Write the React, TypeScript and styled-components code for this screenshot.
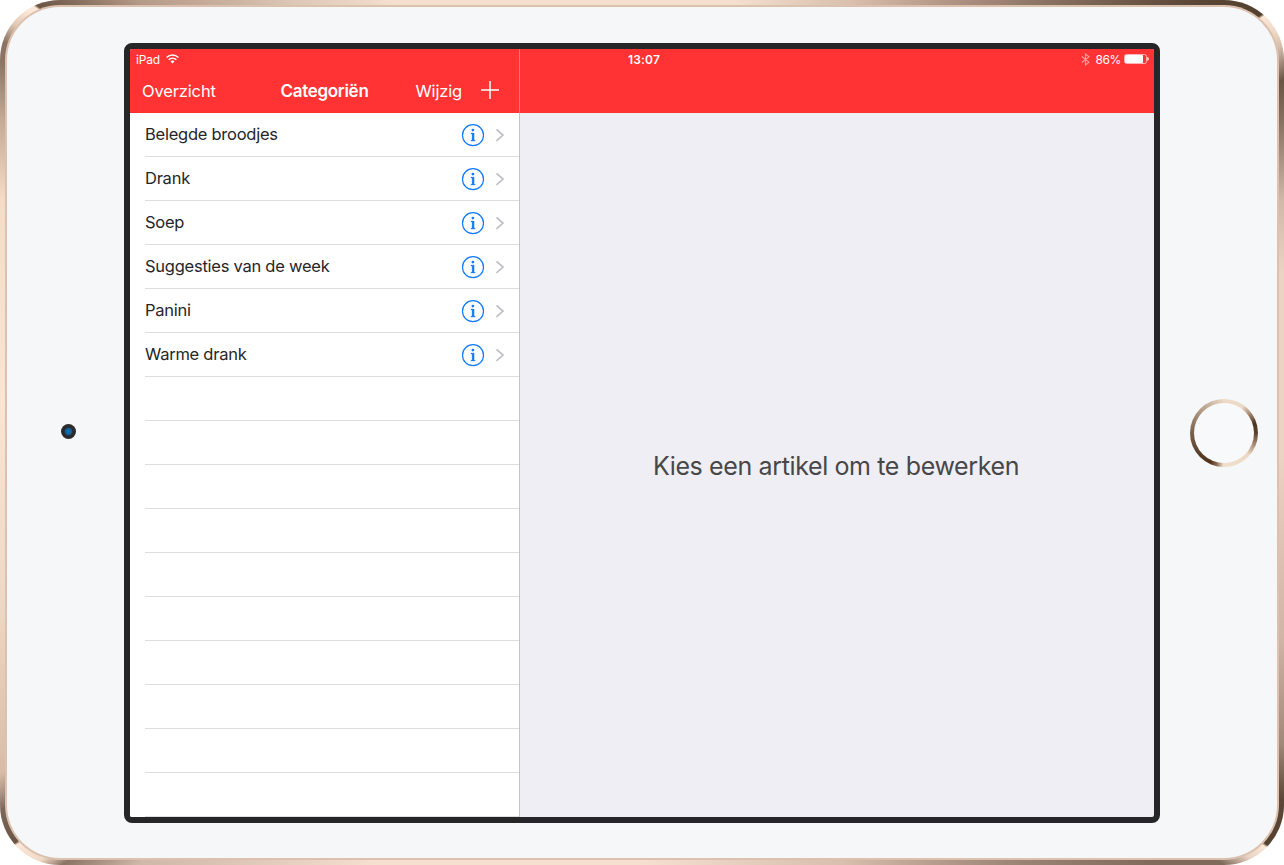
import React from 'react';
import styled, { createGlobalStyle } from 'styled-components';

const Global = createGlobalStyle`
  * { box-sizing: border-box; }
  html, body { margin: 0; background: #fff; overflow: hidden; }
  body { font-family: Inter, "Liberation Sans", sans-serif; color: #262628; }
`;

const Device = styled.div`
  width: 1284px;
  height: 865px;
  padding: 5px;
  border-radius: 60px;
  background: conic-gradient(
    #f5e0cf 0deg, #f5e0cf 12deg, #d8bfae 26deg, #9b8272 40deg, #5a4636 52.4deg, #54402f 56deg,
    #fce8d8 56.2deg, #f0dac8 57.5deg, #d8c0ae 58.8deg, #6a5444 61.2deg, #86705f 64deg, #d0b8a6 70deg,
    #ecd4c2 76deg, #ecd4c2 92deg, #cfb5a3 108deg, #a08878 116deg, #5c4838 119.8deg, #54402f 123.4deg,
    #fce8d8 123.6deg, #e8d4c4 125deg, #806a5c 126.6deg, #806a5c 130deg, #a08878 140deg, #d8bfae 155deg,
    #f5e0cf 180deg, #f5e0cf 212deg, #d0b8a8 229.4deg, #8c7464 233.3deg, #f0dac8 234.6deg, #fce8d8 236.6deg,
    #6a5444 236.8deg, #7c685a 239.5deg, #a89080 240.5deg, #d8baa8 242deg, #dcc2ae 244deg, #f0d8c6 255.4deg,
    #fae4d2 273deg, #f4dcc8 290deg, #dcc4b0 293deg, #c4ab98 296deg, #8c7464 300.2deg, #8c7464 301.5deg,
    #e0c8b5 303deg, #fce8d8 304.5deg, #fce8d8 305deg, #6a5444 305.2deg, #8c7464 307.7deg, #b59a88 310.6deg,
    #dcc6b5 320.7deg, #f5e0cf 330deg, #f5e0cf 360deg
  );
`;

const Rim = styled.div`
  height: 100%;
  padding: 2px;
  border-radius: 55px;
  background: #dbc1ae;
`;

const Face = styled.div`
  height: 100%;
  display: grid;
  grid-template-columns: 117px 1036px 1fr;
  border-radius: 53px;
  background: #f5f7f9;
`;

const Bezel = styled.div`
  display: flex;
  align-items: center;
  justify-content: center;
`;

const Camera = styled.div`
  width: 15px;
  height: 15px;
  margin: -2px -6px 0 0;
  border-radius: 50%;
  background: radial-gradient(circle, #0878c4 0, #145d91 3px, #29292b 4.5px, #2c2c2e 7px);
`;

const HomeButton = styled.div`
  width: 68px;
  height: 68px;
  padding: 4px;
  margin: 1px 0 0 11px;
  border-radius: 50%;
  background: conic-gradient(#ecd9c6 0deg, #ecdac8 35deg, #b69c85 49deg, #50331d 73deg, #5c422d 90deg, #ad9178 112deg, #ecd9c6 132deg, #f1dfcc 181deg, #8b6e55 193deg, #50331d 205deg, #563b25 225deg, #7a614b 270deg, #a88f79 305deg, #ecd9c6 360deg);
  &::before { content: ''; display: block; height: 100%; border-radius: 50%; background: #f8f9fb; }
`;

const Screen = styled.div`
  height: 780px;
  margin-top: 36px;
  border: 6px solid #262628;
  border-radius: 8px;
  display: grid;
  grid-template-rows: 64px 1fr;
  background: #efeef4;
  overflow: hidden;
`;

const Header = styled.header`
  display: grid;
  grid-template-columns: 390px 1fr;
  grid-template-rows: 20px 44px;
  color: #fff;
  background: linear-gradient(90deg, transparent 389px, #ff7474 389px, #ff7474 390px, transparent 390px), #ff3333;
`;

const StatusBar = styled.div`
  grid-column: 1 / -1;
  display: grid;
  grid-template-columns: 1fr 1fr 1fr;
  align-items: center;
  padding: 0 5px 0 6px;
  font-size: 12px;
`;

const StatusGroup = styled.div<{ $end?: boolean }>`
  display: flex;
  align-items: center;
  justify-content: ${p => (p.$end ? 'flex-end' : 'flex-start')};
  gap: ${p => (p.$end ? '3px' : '6px')};
  letter-spacing: ${p => (p.$end ? '-0.35px' : '-0.15px')};
  svg { display: block; }
`;

const Clock = styled.time`
  padding-left: 3px;
  text-align: center;
  font-weight: 600;
  letter-spacing: 0.2px;
`;

const Navigation = styled.nav`
  display: grid;
  grid-template-columns: 1fr auto 1fr;
  align-items: center;
  padding: 0 21px 0 12px;
  font-size: 16.5px;
  letter-spacing: -0.15px;
`;

const Title = styled.strong`
  padding-left: 8px;
  font-size: 17px;
  font-weight: 600;
  letter-spacing: -0.3px;
`;

const Actions = styled.div`
  display: flex;
  align-items: center;
  justify-content: flex-end;
  gap: 19px;
  svg { display: block; margin-bottom: 2px; }
`;

const Content = styled.main`
  display: grid;
  grid-template-columns: 390px 1fr;
  min-height: 0;
`;

const Categories = styled.ul`
  margin: 0;
  padding: 0 0 0 15px;
  list-style: none;
  overflow: hidden;
  background: #fff;
  border-right: 1px solid #c5c5c9;
`;

const Row = styled.li`
  height: 44px;
  display: flex;
  align-items: center;
  padding-right: 14px;
  border-bottom: 1px solid #dedee0;
  font-size: 16.5px;
  letter-spacing: -0.25px;
`;

const RowLabel = styled.span`
  flex: 1;
  padding-bottom: 2px;
`;

const Detail = styled.section`
  display: flex;
  align-items: center;
  justify-content: center;
  padding: 2px 2px 0 0;
  color: #47474a;
  font-size: 25px;
  letter-spacing: -0.37px;
`;

const WifiIcon = () => (
  <svg width="13" height="10" viewBox="0 0 13 10" fill="none" stroke="#fff" strokeWidth="1.5">
    <path d="M.6 3.5C4 .2 9 .2 12.4 3.5M2.7 5.7c2.2-2.1 5.4-2.1 7.6 0" />
    <path d="M4.5 7.4c1.2-1.1 2.8-1.1 4 0l-2 2z" fill="#fff" stroke="none" />
  </svg>
);

const BluetoothIcon = () => (
  <svg width="11" height="13" viewBox="0 0 11 13" fill="none" stroke="#ff9c9c" strokeWidth="1.1">
    <path d="M.8 3.5 8 9.3 4.5 12V1L8 3.7.8 9.5" />
  </svg>
);

const BatteryIcon = () => (
  <svg width="25" height="10" viewBox="0 0 25 10">
    <rect x=".5" y=".5" width="22" height="9" rx="2" fill="none" stroke="#ffb3b3" />
    <rect x="1" y="1" width="18" height="8" rx="1" fill="#fff" />
    <path d="M23.3 3.1c2 .7 2 3.1 0 3.8z" fill="#fff" />
  </svg>
);

const PlusIcon = () => (
  <svg width="18" height="18" viewBox="0 0 18 18" stroke="#fff" strokeWidth="1.5">
    <path d="M9 0v18M0 9h18" />
  </svg>
);

const RowIcons = () => (
  <svg width="44" height="24" viewBox="0 0 44 24" fill="none">
    <circle cx="12" cy="12.2" r="10.5" stroke="#127cf8" strokeWidth="1.2" />
    <circle cx="11.9" cy="7.1" r="1.4" fill="#127cf8" />
    <path d="M10 10.1h3.1v7.2h1v.8H9.9v-.8h1.2v-6.4H10z" fill="#127cf8" stroke="#127cf8" strokeWidth=".3" />
    <path d="m35.5 6.3 6.5 5.8-6.5 5.8" stroke="#bdbdc2" strokeWidth="1.6" />
  </svg>
);

const categories = ['Belegde broodjes', 'Drank', 'Soep', 'Suggesties van de week', 'Panini', 'Warme drank'];
const emptyRows = Array.from({ length: 10 }, (_, i) => i);

export default function App() {
  return (
    <>
      <Global />
      <Device>
        <Rim>
          <Face>
            <Bezel><Camera /></Bezel>
            <Screen>
              <Header>
                <StatusBar>
                  <StatusGroup>iPad <WifiIcon /></StatusGroup>
                  <Clock>13:07</Clock>
                  <StatusGroup $end><BluetoothIcon /><span>86%</span><BatteryIcon /></StatusGroup>
                </StatusBar>
                <Navigation>
                  <span>Overzicht</span>
                  <Title>Categoriën</Title>
                  <Actions><span>Wijzig</span><PlusIcon /></Actions>
                </Navigation>
              </Header>
              <Content>
                <Categories>
                  {categories.map(name => (
                    <Row key={name}><RowLabel>{name}</RowLabel><RowIcons /></Row>
                  ))}
                  {emptyRows.map(i => <Row key={i} />)}
                </Categories>
                <Detail>Kies een artikel om te bewerken</Detail>
              </Content>
            </Screen>
            <Bezel><HomeButton /></Bezel>
          </Face>
        </Rim>
      </Device>
    </>
  );
}
